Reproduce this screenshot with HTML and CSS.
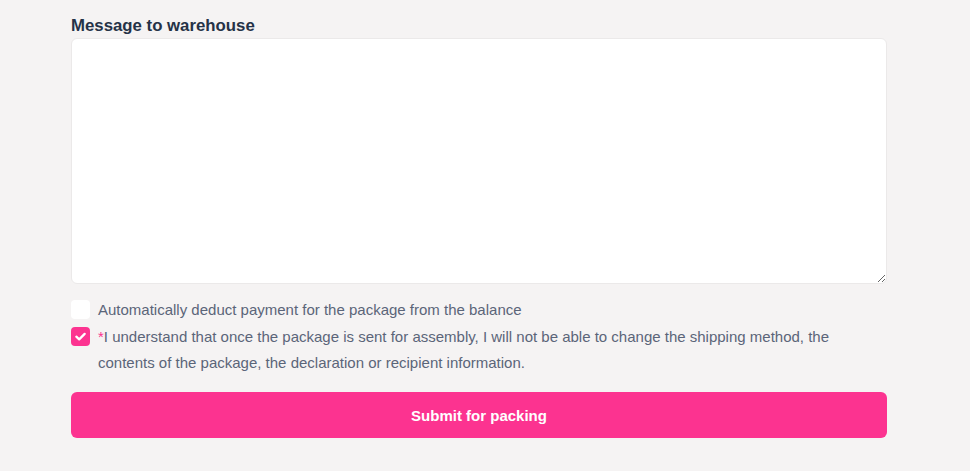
FILE: index.html
```html
<!DOCTYPE html>
<html lang="en">
<head>
  <meta charset="UTF-8" />
  <meta name="viewport" content="width=device-width, initial-scale=1.0" />
  <title>Submit for packing</title>
  <link rel="stylesheet" href="styles.css">
</head>
<body>

  <form class="pack-form">
    <label class="field-label" for="message">Message to warehouse</label>
    <textarea class="message" id="message"></textarea>

    <div class="options">
      <label class="option">
        <span class="box"></span>
        <span class="option-text">Automatically deduct payment for the package from the balance</span>
      </label>
      <label class="option">
        <span class="box checked">
          <svg viewBox="0 0 20 20" width="20" height="20">
            <path d="M5.6 10.2 L8.6 13 L14.4 7.2" fill="none" stroke="#fff" stroke-width="2.4" stroke-linecap="round" stroke-linejoin="round"/>
          </svg>
        </span>
        <span class="option-text required">I understand that once the package is sent for assembly, I will not be able to change the shipping method, the contents of the package, the declaration or recipient information.</span>
      </label>
    </div>

    <button type="button" class="submit">Submit for packing</button>
  </form>

</body>
</html>
```

FILE: styles.css
```css
* {
  margin: 0;
  padding: 0;
  box-sizing: border-box;
  font-family: "Liberation Sans", Arial, sans-serif;
}

body {
  background: #f5f3f3;
  height: 100vh;
  overflow: hidden;
}

.pack-form {
  width: 816px;
  margin-left: 71px;
  padding-top: 16px;
  display: flex;
  flex-direction: column;
}

.field-label {
  font-size: 16.8px;
  font-weight: 700;
  color: #253247;
  line-height: 20px;
  margin-bottom: 2px;
}

.message {
  display: block;
  width: 100%;
  height: 246px;
  background: #fff;
  border: 1px solid #ebe9e9;
  border-radius: 6px;
  resize: vertical;
  outline: none;
}

.options {
  margin-top: 13px;
  display: flex;
  flex-direction: column;
  gap: 1px;
}

.option {
  display: flex;
  align-items: flex-start;
  gap: 8px;
  font-size: 15px;
  line-height: 26px;
  color: #5b6579;
}

.box {
  flex: none;
  width: 19px;
  height: 19px;
  margin-top: 3px;
  background: #fff;
  border-radius: 4px;
  display: flex;
  align-items: center;
  justify-content: center;
}

.box.checked {
  background: #fc3390;
}

.box svg {
  width: 19px;
  height: 19px;
}

.required::before {
  content: "*";
  color: #fc3390;
}

.submit {
  margin-top: 16px;
  height: 46px;
  width: 100%;
  border: none;
  border-radius: 6px;
  background: #fc3390;
  color: #fff;
  font-size: 15px;
  font-weight: 700;
  cursor: pointer;
}
```
